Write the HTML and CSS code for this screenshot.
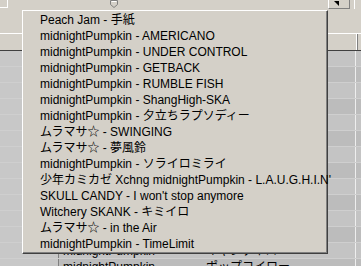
FILE: index.html
```html
<!DOCTYPE html>
<html lang="ja">
<head>
	<meta charset="UTF-8">
	<title>playlist</title>
	<link rel="stylesheet" href="styles.css">
</head>
<body>
	<div class="win">
		<div class="toolbar">
			<div class="seek">
				<div class="seekbox"></div>
				<svg class="thumb" width="9" height="8" viewBox="0 0 9 8"><path d="M0.5 0.5H7.5V4.5L4 7.5L0.5 4.5Z" fill="#d4d0c8" stroke="#808080"/><path d="M1.5 1.5H6.5" stroke="#fff"/></svg>
				<div class="tbtn"><svg width="8" height="8" viewBox="0 0 8 8"><path d="M1 1H6L6 6Z" fill="#000"/></svg></div>
				<div class="tbtn2"></div>
			</div>
		</div>
		<div class="list">
			<div class="head"><span class="h1"></span><span class="h2"></span><span class="h3"></span></div>
			<div class="row"><span class="c1"></span><span class="c2">midnightPumpkin</span><span class="c3">ソライロミライ</span></div>
			<div class="row"><span class="c1"></span><span class="c2">midnightPumpkin</span><span class="c3">ソライロミライ</span></div>
			<div class="row"><span class="c1"></span><span class="c2">midnightPumpkin</span><span class="c3">ソライロミライ</span></div>
			<div class="row"><span class="c1"></span><span class="c2">midnightPumpkin</span><span class="c3">ソライロミライ</span></div>
			<div class="row"><span class="c1"></span><span class="c2">midnightPumpkin</span><span class="c3">ソライロミライ</span></div>
			<div class="row"><span class="c1"></span><span class="c2">midnightPumpkin</span><span class="c3">ソライロミライ</span></div>
			<div class="row"><span class="c1"></span><span class="c2">midnightPumpkin</span><span class="c3">ソライロミライ</span></div>
			<div class="row"><span class="c1"></span><span class="c2">midnightPumpkin</span><span class="c3">ソライロミライ</span></div>
			<div class="row"><span class="c1"></span><span class="c2">midnightPumpkin</span><span class="c3">ソライロミライ</span></div>
			<div class="row"><span class="c1"></span><span class="c2">midnightPumpkin</span><span class="c3">ソライロミライ</span></div>
			<div class="row"><span class="c1"></span><span class="c2">midnightPumpkin</span><span class="c3">ソライロミライ</span></div>
			<div class="row"><span class="c1"></span><span class="c2">midnightPumpkin</span><span class="c3">ソライロミライ</span></div>
			<div class="row"><span class="c1"></span><span class="c2">midnightPumpkin</span><span class="c3">キャンディロー</span></div>
			<div class="row"><span class="c1"></span><span class="c2">midnightPumpkin</span><span class="c3">ポップコイロー</span></div>
		</div>

		<ul class="drop">
			<li>Peach Jam - 手紙</li>
			<li>midnightPumpkin - AMERICANO</li>
			<li>midnightPumpkin - UNDER CONTROL</li>
			<li>midnightPumpkin - GETBACK</li>
			<li>midnightPumpkin - RUMBLE FISH</li>
			<li>midnightPumpkin - ShangHigh-SKA</li>
			<li>midnightPumpkin - 夕立ちラプソディー</li>
			<li>ムラマサ☆ - SWINGING</li>
			<li>ムラマサ☆ - 夢風鈴</li>
			<li>midnightPumpkin - ソライロミライ</li>
			<li>少年カミカゼ Xchng midnightPumpkin - L.A.U.G.H.I.N'</li>
			<li>SKULL CANDY - I won't stop anymore</li>
			<li>Witchery SKANK - キミイロ</li>
			<li>ムラマサ☆ - in the Air</li>
			<li>midnightPumpkin - TimeLimit</li>
		</ul>
	</div>
</body>
</html>
```

FILE: styles.css
```css
*{
	margin:0;
	padding:0;
}
body{
	background:#d4d0c8;
}
.win{
	position:relative;
	width:361px;
	height:266px;
	overflow:hidden;
	background:#d4d0c8;
	font-family:"Liberation Sans Narrow","Liberation Sans","Noto Sans CJK JP",sans-serif;
	font-size:12px;
	color:#000;
}
.toolbar{
	height:33px;
}
.seek{
	display:flex;
	align-items:flex-start;
	height:10px;
}
.seekbox{
	width:8px;
	height:8px;
	border-right:1px solid #fff;
	border-bottom:1px solid #fff;
	box-sizing:border-box;
}
.thumb{
	margin-left:102px;
}
.tbtn{
	margin-left:209px;
	width:22px;
	height:9px;
	box-sizing:border-box;
	border-left:1px solid #fff;
	border-right:1px solid #808080;
	border-bottom:1px solid #808080;
	padding:0 0 0 4px;
}
.tbtn svg{
	display:block;
}
.tbtn2{
	margin-left:4px;
	width:4px;
	height:9px;
	border-left:1px solid #fff;
}
.list{
	border-top:1px solid #fff;
}
.head{
	display:flex;
	height:16px;
	border-bottom:1px solid #404040;
}
.head span{
	border-right:1px solid #808080;
	box-shadow:inset -1px 0 #fff;
}
.h1{
	width:58px;
}
.h2{
	width:142px;
}
.h3{
	width:155px;
}
.row{
	display:flex;
	height:16px;
	line-height:16px;
	background:#c4c4c4;
	border-bottom:1px solid #cfcfcf;
	box-sizing:border-box;
}
.row:nth-child(odd){
	background:#bcbcbc;
}
.row span{
	white-space:nowrap;
	overflow:hidden;
}
.c1{
	width:58px;
	background:#c8c8c8;
	border-right:1px solid #808080;
}
.c2{
	width:142px;
	padding-left:4px;
	box-sizing:border-box;
}
.c3{
	width:155px;
	padding-left:5px;
	box-sizing:border-box;
	border-right:1px solid #eee;
}
.drop{
	position:absolute;
	left:22px;
	top:10px;
	width:306px;
	height:244px;
	box-sizing:border-box;
	list-style:none;
	padding:1px 0 0 17px;
	background:#d4d0c8;
	border-top:1px solid #fff;
	border-left:1px solid #fff;
	border-right:1px solid #404040;
	border-bottom:1px solid #404040;
	box-shadow:inset -1px -1px #808080;
}
.drop li{
	height:16px;
	line-height:16px;
	white-space:nowrap;
}
```
